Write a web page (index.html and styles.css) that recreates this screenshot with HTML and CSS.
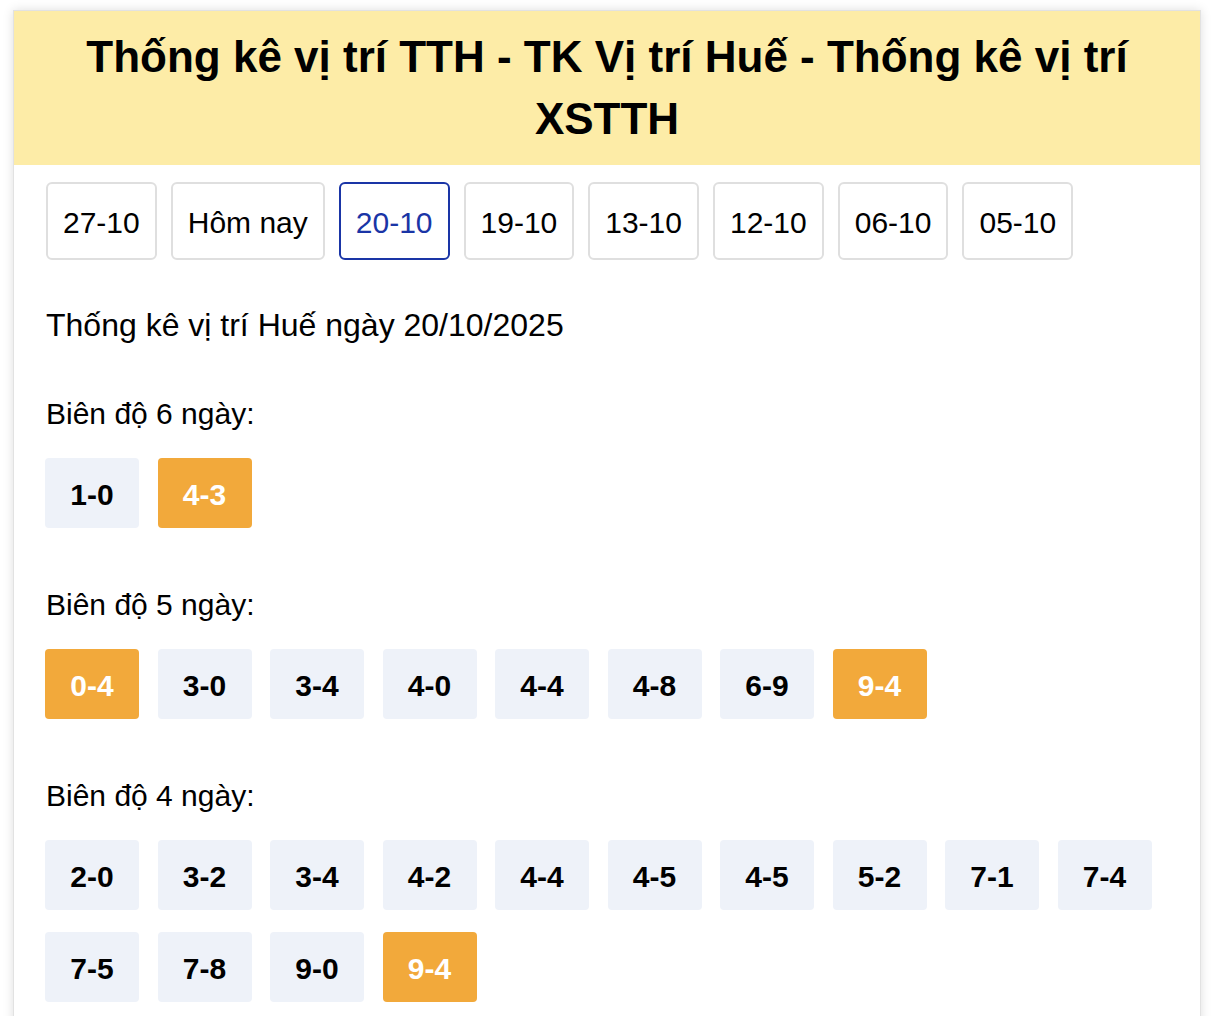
FILE: index.html
```html
<!DOCTYPE html>
<html lang="vi">
<head>
<meta charset="utf-8">
<title>Thống kê vị trí TTH</title>
<link rel="stylesheet" href="styles.css">
</head>
<body>
<div class="card">
  <div class="card-header">
    <h1 class="title">Thống kê vị trí TTH - TK Vị trí Huế - Thống kê vị trí XSTTH</h1>
  </div>
  <div class="card-body">
    <div class="dates">
      <a class="date">27-10</a>
      <a class="date">Hôm nay</a>
      <a class="date active">20-10</a>
      <a class="date">19-10</a>
      <a class="date">13-10</a>
      <a class="date">12-10</a>
      <a class="date">06-10</a>
      <a class="date">05-10</a>
    </div>
    <p class="heading">Thống kê vị trí Huế ngày 20/10/2025</p>

    <div class="section">
      <div class="label">Biên độ 6 ngày:</div>
      <div class="nums">
        <span class="num">1-0</span>
        <span class="num hot">4-3</span>
      </div>
    </div>

    <div class="section">
      <div class="label">Biên độ 5 ngày:</div>
      <div class="nums">
        <span class="num hot">0-4</span>
        <span class="num">3-0</span>
        <span class="num">3-4</span>
        <span class="num">4-0</span>
        <span class="num">4-4</span>
        <span class="num">4-8</span>
        <span class="num">6-9</span>
        <span class="num hot">9-4</span>
      </div>
    </div>

    <div class="section">
      <div class="label">Biên độ 4 ngày:</div>
      <div class="nums">
        <span class="num">2-0</span>
        <span class="num">3-2</span>
        <span class="num">3-4</span>
        <span class="num">4-2</span>
        <span class="num">4-4</span>
        <span class="num">4-5</span>
        <span class="num">4-5</span>
        <span class="num">5-2</span>
        <span class="num">7-1</span>
        <span class="num">7-4</span>
        <span class="num">7-5</span>
        <span class="num">7-8</span>
        <span class="num">9-0</span>
        <span class="num hot">9-4</span>
      </div>
    </div>
  </div>
</div>
</body>
</html>
```
FILE: styles.css
```css
* { box-sizing: border-box; }
html, body {
  margin: 0;
  padding: 0;
  background: #ffffff;
  font-family: "Liberation Sans", Arial, Helvetica, sans-serif;
  color: #000;
}
.card {
  margin: 10px 15px 0 13px;
  width: 1188px;
  border: 1px solid #e2e2e2;
  background: #fff;
  box-shadow: 0 0 10px rgba(0, 0, 0, 0.13);
}
.card-header {
  background: #fdeca7;
  padding: 15px 20px 15px;
}
.title {
  margin: 0;
  font-size: 44px;
  line-height: 62px;
  font-weight: 700;
  text-align: center;
}
.card-body {
  padding: 17px 32px 40px;
}
.dates {
  display: flex;
  flex-wrap: wrap;
  gap: 14px;
}
.date {
  display: block;
  border: 2px solid #dfdfdf;
  border-radius: 6px;
  padding: 4px 15px 0;
  font-size: 30px;
  line-height: 70px;
  color: #000;
  text-decoration: none;
}
.date.active {
  border-color: #1a35a6;
  color: #1a35a6;
}
.heading {
  margin: 46px 0 0;
  font-size: 32px;
  line-height: 38px;
}
.section {
  margin-top: 52px;
}
.section + .section {
  margin-top: 59px;
}
.label {
  font-size: 30px;
  line-height: 36px;
}
.nums {
  margin-top: 26px;
  margin-left: -1px;
  display: flex;
  flex-wrap: wrap;
  column-gap: 18.5px;
  row-gap: 22px;
}
.num {
  display: block;
  width: 94px;
  height: 70px;
  padding-top: 3px;
  line-height: 67px;
  text-align: center;
  font-size: 30px;
  font-weight: 700;
  background: #eef2f9;
  border-radius: 4px;
  color: #000;
}
.num.hot {
  background: #f2a93b;
  color: #fff;
}
```
